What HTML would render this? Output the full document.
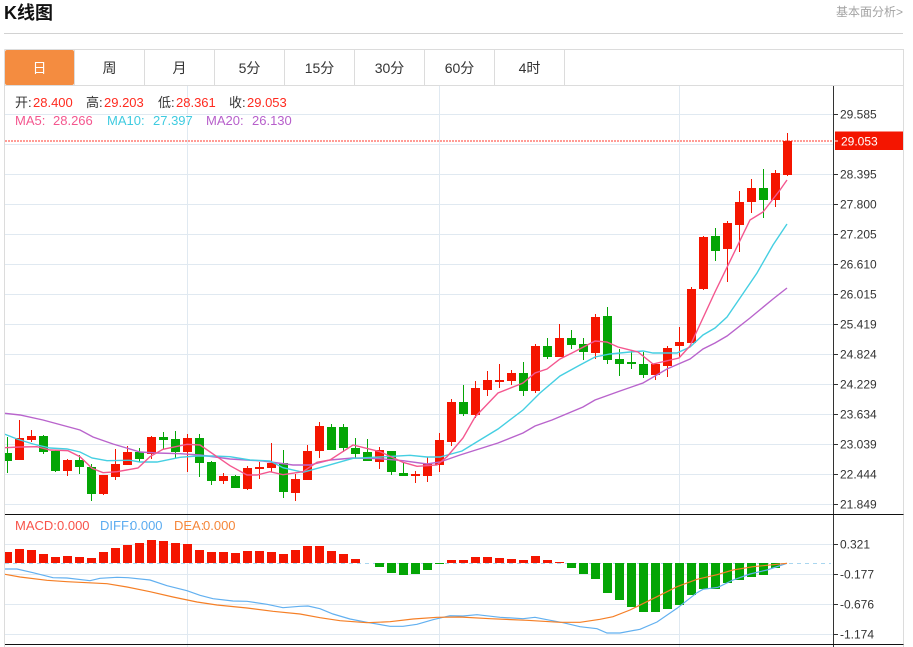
<!DOCTYPE html>
<html lang="zh">
<head>
<meta charset="utf-8">
<title>K线图</title>
<style>
html,body{margin:0;padding:0;background:#fff;width:913px;height:647px;overflow:hidden}
svg{display:block;position:absolute;left:0;top:0;font-family:"Liberation Sans","Noto Sans CJK SC",sans-serif}
</style>
</head>
<body>
<svg width="913" height="647" viewBox="0 0 913 647" xmlns="http://www.w3.org/2000/svg">
<defs><clipPath id="pl"><rect x="5" y="85" width="828" height="562"/></clipPath></defs>
<text x="4" y="19" font-size="18" font-weight="bold" fill="#111">K线图</text>
<text x="903" y="16" font-size="12" fill="#a3a3a3" text-anchor="end">基本面分析&gt;</text>
<path d="M4 33.5H903" stroke="#d2d2d2" stroke-width="1"/>

<!-- frame and tabs -->
<path d="M4.5 49.5H903.5V647M4.5 49.5V647M4 85.5H903.5M74.5 50V85M144.5 50V85M214.5 50V85M284.5 50V85M354.5 50V85M424.5 50V85M494.5 50V85M564.5 50V85" fill="none" stroke="#dcdcdc"/>
<rect x="5" y="50" width="69" height="35" rx="2" fill="#f48c40"/>
<g font-size="14" text-anchor="middle" fill="#333">
<text x="39.5" y="73" fill="#fff">日</text>
<text x="109.5" y="73">周</text>
<text x="179.5" y="73">月</text>
<text x="249.5" y="73">5分</text>
<text x="319.5" y="73">15分</text>
<text x="389.5" y="73">30分</text>
<text x="459.5" y="73">60分</text>
<text x="529.5" y="73">4时</text>
</g>

<!-- grid -->
<path d="M5 114.5H833M5 144.5H833M5 174.5H833M5 204.5H833M5 234.5H833M5 264.5H833M5 294.5H833M5 324.5H833M5 354.5H833M5 384.5H833M5 414.5H833M5 444.5H833M5 474.5H833M5 504.5H833M5 544.5H833M5 574.5H833M5 604.5H833M5 634.5H833M187.5 86V647M439.5 86V647M679.5 86V647" fill="none" stroke="#e0e9f1"/>

<!-- price dash line -->
<path d="M5 141H833" stroke="#ff3a2e" stroke-width="1" stroke-dasharray="2 1" fill="none"/>

<g clip-path="url(#pl)">
<!-- red wicks -->
<path fill="none" stroke="#f41500" stroke-width="1" shape-rendering="crispEdges" d="M19.5 420V460M31.5 430V442M67.5 459V476M103.5 475V495M115.5 449V480M127.5 446V465M151.5 436V459M187.5 434V472M223.5 473V484M247.5 466V490M259.5 462V479M271.5 443V472M295.5 474V501M307.5 445V480M319.5 422V458M379.5 447V469M415.5 471V483M427.5 457V482M439.5 433V472M451.5 399V446M475.5 381V418M487.5 371V396M499.5 364V388M511.5 370V385M535.5 344V393M559.5 324V357M595.5 314V359M655.5 364V380M667.5 346V377M679.5 327V358M691.5 287V343M703.5 236V290M727.5 221V282M739.5 191V252M751.5 179V213M775.5 170V207M787.5 133V176"/>
<!-- red bodies -->
<path fill="none" stroke="#f41500" stroke-width="9" shape-rendering="crispEdges" d="M19.5 438V460M31.5 436V440M67.5 460V471M103.5 475V494M115.5 464V477M127.5 452V465M151.5 437V454M187.5 438V452M223.5 476V481M247.5 468V489M259.5 467V469M271.5 463V468M295.5 479V493M307.5 451V480M319.5 426V451M379.5 450V462M415.5 474V476M427.5 464V476M439.5 440V465M451.5 402V442M475.5 388V415M487.5 380V390M499.5 380V382M511.5 373V381M535.5 346V391M559.5 338V357M595.5 317V353M655.5 364V375M667.5 348V366M679.5 342V346M691.5 289V343M703.5 237V289M727.5 223V249M739.5 202V225M751.5 188V202M775.5 173V200M787.5 141V175"/>
<!-- green wicks -->
<path fill="none" stroke="#04a505" stroke-width="1" shape-rendering="crispEdges" d="M7.5 437V473M43.5 435V454M55.5 450V472M79.5 455V474M91.5 464V501M139.5 448V462M163.5 432V449M175.5 431V458M199.5 434V477M211.5 461V485M235.5 475V488M283.5 450V498M331.5 424V450M343.5 424V452M355.5 438V458M367.5 439V461M391.5 451V475M403.5 462V476M463.5 385V416M523.5 362V396M547.5 338V359M571.5 330V349M583.5 338V360M607.5 307V364M619.5 349V376M631.5 351V369M643.5 352V378M715.5 228V261M763.5 169V218"/>
<!-- green bodies -->
<path fill="none" stroke="#04a505" stroke-width="9" shape-rendering="crispEdges" d="M7.5 453V461M43.5 436V452M55.5 451V471M79.5 460V467M91.5 467V494M139.5 452V459M163.5 437V440M175.5 439V452M199.5 438V463M211.5 462V481M235.5 476V488M283.5 463V492M331.5 427V450M343.5 427V448M355.5 448V454M367.5 452V461M391.5 451V472M403.5 473V476M463.5 402V414M523.5 373V391M547.5 346V357M571.5 338V345M583.5 344V352M607.5 316V360M619.5 359V364M631.5 362V364M643.5 364V375M715.5 236V251M763.5 188V200"/>

<!-- MA lines -->
<polyline fill="none" stroke="#b964cc" stroke-width="1.4" points="5,413.3 20,415 43,420 80,430 93,437 113,444 140,452 157,453 180,453.7 200,455 230,459 263,461 293,465 310,465 330,460 353,458 380,458.7 403,460.7 427,464 440,462 460,455 498,443 523,433 535,426 552,420 583,407 595,400 620,391 643,383 667,369 690,359 703,349 715,343 727,336 750,318 773,299 787,288"/>
<polyline fill="none" stroke="#45cfe2" stroke-width="1.4" points="5,434.3 17,439 33,444 50,448 67,449 80,452 92,458 107,460.7 130,460.3 140,462 157,462 180,457.3 197,456 213,456 230,456.7 250,460 270,461 283,467.7 303,472.3 327,465.7 353,458.3 380,457 410,455.3 427,457 440,457 462,451 475,443 498,429 523,410 540,393 560,376 580,365 595,357 610,354 630,352 643,351 653,353 677,353 690,347 703,335 715,328 727,317 740,298 757,273 773,245 787,224"/>
<polyline fill="none" stroke="#f4578f" stroke-width="1.4" points="5,447.7 20,447 37,446.7 50,450 68,450.7 80,456.7 92,468.3 103,472.7 117,471.7 138,468 150,456.7 163,449.3 187,444.3 200,445 217,456.7 230,465.7 247,475 257,475 270,471.7 283,474.7 303,471.7 317,462.3 330,460 353,445 380,451.7 403,462.3 417,466.3 437,465 447,456.7 463,438 475,417 498,393 523,383 535,373 547,369 560,359 572,353 595,341 607,342 618,347 638,352 653,364 679,358 690,346 715,292 750,220 763,212 780,190 787,180"/>

<!-- MACD zero dash -->
<path d="M5 563.5H831" stroke="#a9d6ef" stroke-dasharray="4 4" fill="none"/>
<!-- MACD red bars -->
<path fill="none" stroke="#f41500" stroke-width="9" shape-rendering="crispEdges" d="M7.5 552V563M19.5 549V563M31.5 550V563M43.5 554V563M55.5 557V563M67.5 556V563M79.5 557V563M91.5 558V563M103.5 552V563M115.5 548V563M127.5 545V563M139.5 543V563M151.5 540V563M163.5 541V563M175.5 543V563M187.5 544V563M199.5 550V563M211.5 552V563M223.5 552V563M235.5 553V563M247.5 551V563M259.5 551V563M271.5 552V563M283.5 554V563M295.5 550V563M307.5 546V563M319.5 546V563M331.5 551V563M343.5 554V563M355.5 559V563M451.5 560V563M463.5 560V563M475.5 557V563M487.5 557V563M499.5 558V563M511.5 559V563M523.5 560V563M535.5 556V563M547.5 560V563M559.5 562V563"/>
<!-- MACD green bars -->
<path fill="none" stroke="#04a505" stroke-width="9" shape-rendering="crispEdges" d="M379.5 563V567M391.5 563V573M403.5 563V575M415.5 563V574M427.5 563V570M439.5 563V564M571.5 563V568M583.5 563V574M595.5 563V579M607.5 563V593M619.5 563V600M631.5 563V607M643.5 563V612M655.5 563V612M667.5 563V609M679.5 563V605M691.5 563V595M703.5 563V589M715.5 563V589M727.5 563V583M739.5 563V580M751.5 563V577M763.5 563V575M775.5 563V568"/>
<polyline fill="none" stroke="#62b0f0" stroke-width="1.2" points="5,569 17,569 33,572.7 53,577.7 67,578 90,580.7 100,578.3 117,577.3 128,577.7 150,580 167,585.7 187,590.7 200,595.3 213,598.7 233,601 247,601.3 267,604.3 283,607.7 300,606.3 308,606 320,608.7 333,614 350,619 367,622.3 390,626.3 403,626.3 417,624.3 433,619.7 450,615.7 463,616 477,614.7 500,617.3 523,618.7 535,617.3 547,619.7 563,622.7 580,626.7 597,628.7 607,633 620,633 640,629.3 657,622 677,608.3 697,592.7 703,589.3 718,587.3 733,580 750,574 767,570 787,563.3"/>
<polyline fill="none" stroke="#f57f26" stroke-width="1.2" points="5,574.3 20,577 47,580.3 67,581.7 87,582.7 107,583.7 127,587 150,591.7 173,597 197,602 217,605 247,608 273,611.3 300,614 320,617.7 340,620.7 367,622.7 390,621.7 413,619 437,617.3 460,617 490,618.7 527,620.3 560,622.3 580,622.3 600,619.3 613,616.7 630,610 657,596.7 677,586.7 697,579.3 717,574.7 733,570 753,566.7 787,563.3"/>
</g>

<!-- axes -->
<path d="M833.5 86V647" stroke="#333" fill="none"/>
<path d="M5 514.5H903.5M5 644.5H903.5" stroke="#111" fill="none"/>
<path d="M834 114.5H838M834 174.5H838M834 204.5H838M834 234.5H838M834 264.5H838M834 294.5H838M834 324.5H838M834 354.5H838M834 384.5H838M834 414.5H838M834 444.5H838M834 474.5H838M834 504.5H838M834 544.5H838M834 574.5H838M834 604.5H838M834 634.5H838" stroke="#333" fill="none"/>
<rect x="835" y="131.5" width="68" height="18.5" fill="#f41500"/>
<path d="M835 141H838" stroke="#fff" fill="none"/>
<g font-size="12" fill="#333">
<text x="840" y="118.5">29.585</text>
<text x="841" y="145.5" fill="#fff">29.053</text>
<text x="840" y="178.5">28.395</text>
<text x="840" y="208.5">27.800</text>
<text x="840" y="238.5">27.205</text>
<text x="840" y="268.5">26.610</text>
<text x="840" y="298.5">26.015</text>
<text x="840" y="328.5">25.419</text>
<text x="840" y="358.5">24.824</text>
<text x="840" y="388.5">24.229</text>
<text x="840" y="418.5">23.634</text>
<text x="840" y="448.5">23.039</text>
<text x="840" y="478.5">22.444</text>
<text x="840" y="508.5">21.849</text>
<text x="840" y="548.5">0.321</text>
<text x="840" y="578.5">-0.177</text>
<text x="840" y="608.5">-0.676</text>
<text x="840" y="638.5">-1.174</text>
</g>

<!-- info text -->
<g font-size="13">
<g fill="#333">
<text x="15" y="107">开:</text><text x="86" y="107">高:</text><text x="158" y="107">低:</text><text x="229" y="107">收:</text>
</g>
<g fill="#ff2a1f">
<text x="33" y="107">28.400</text><text x="104" y="107">29.203</text><text x="176" y="107">28.361</text><text x="247" y="107">29.053</text>
</g>
<g fill="#f4578f"><text x="15" y="125">MA5:</text><text x="53" y="125">28.266</text></g>
<g fill="#3fcbe0"><text x="107" y="125">MA10:</text><text x="153" y="125">27.397</text></g>
<g fill="#b75fcb"><text x="206" y="125">MA20:</text><text x="252" y="125">26.130</text></g>
<g fill="#f8534a"><text x="15" y="530">MACD:</text><text x="57" y="530">0.000</text></g>
<g fill="#5cacf0"><text x="100" y="530">DIFF:</text><text x="130" y="530">0.000</text></g>
<g fill="#f5873a"><text x="174" y="530">DEA:</text><text x="203" y="530">0.000</text></g>
</g>
</svg>
</body>
</html>
